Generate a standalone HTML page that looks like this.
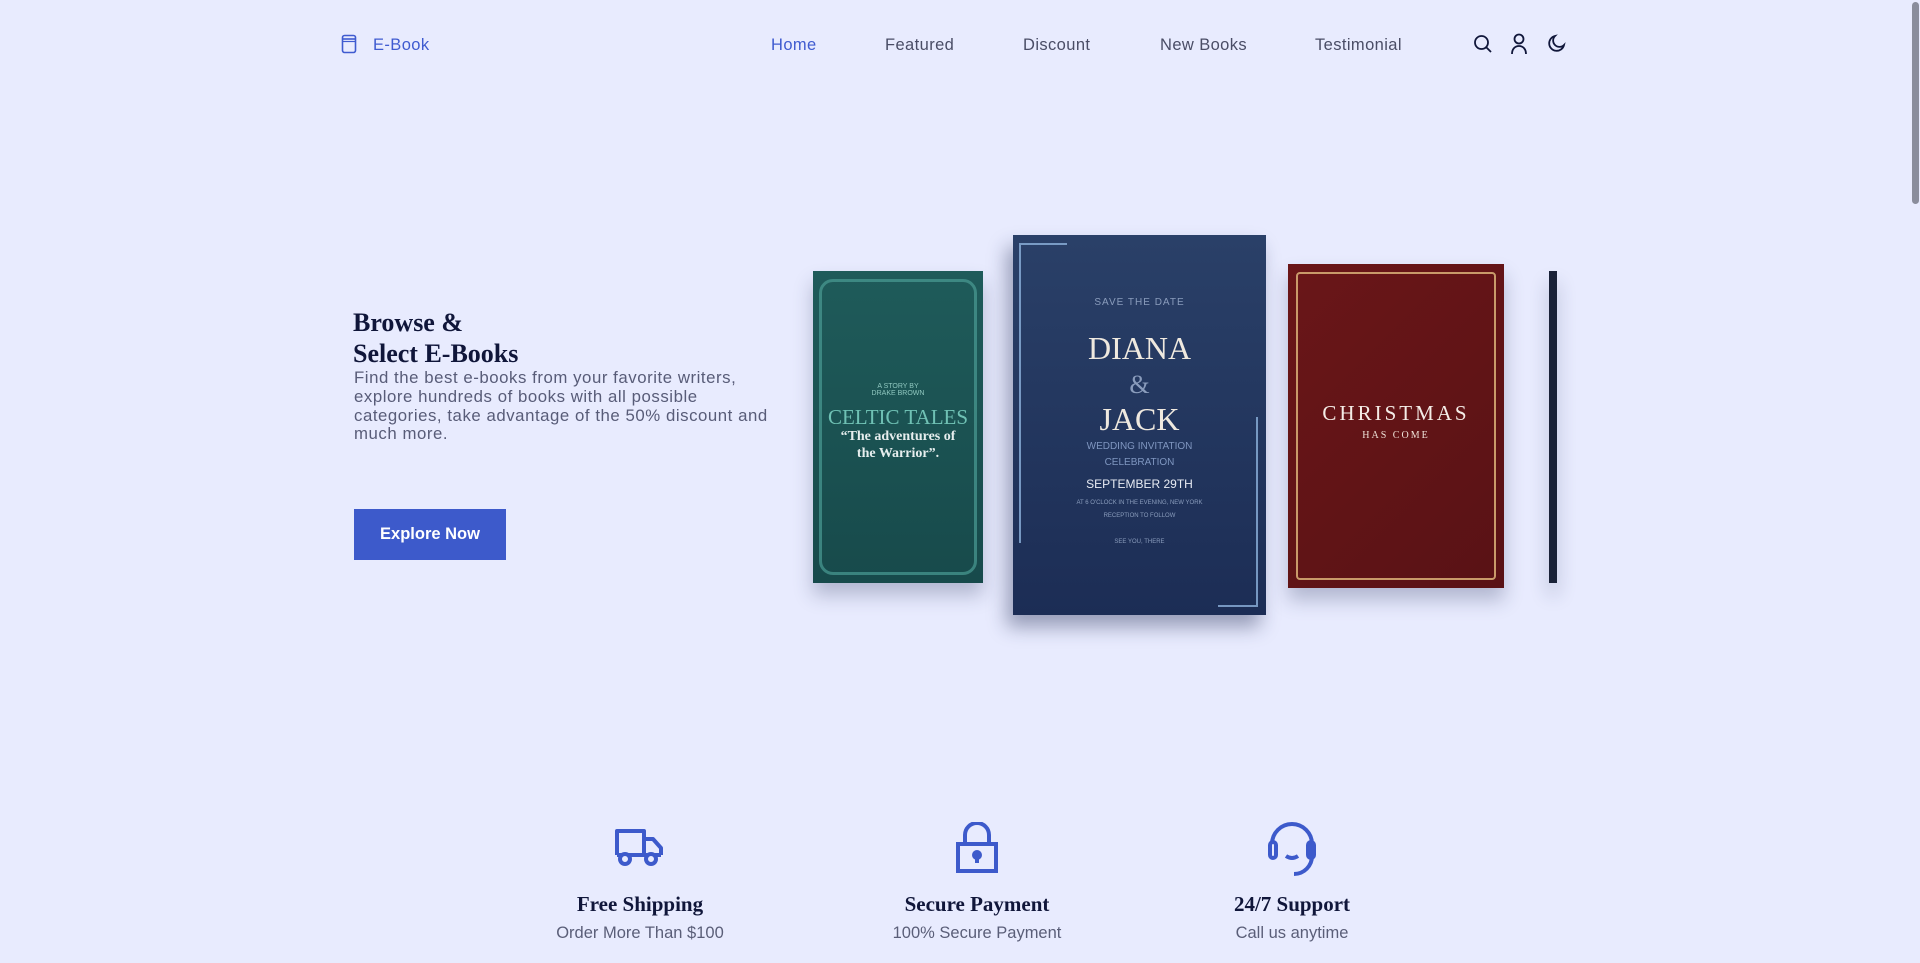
<!DOCTYPE html>
<html><head><meta charset="utf-8"><style>
*{margin:0;padding:0;box-sizing:border-box}
body{width:1920px;height:963px;overflow:hidden;background:#e8ebfe;font-family:"Liberation Sans",sans-serif;color:#5a5e78;position:relative}
.a{position:absolute}
.nav{font-size:16.5px;color:#4a4d66;top:36px;letter-spacing:.4px}
.serif{font-family:"Liberation Serif",serif;font-weight:bold;color:#10163a}
.book{position:absolute;box-shadow:0 12px 18px rgba(40,50,90,.28)}
.ct{text-align:center;position:absolute;left:0;right:0}
</style></head><body>
<svg class="a" style="left:341px;top:34px" width="16" height="20" viewBox="0 0 16 20"><rect x="1.5" y="1.5" width="13" height="17" rx="2" fill="none" stroke="#3f5bd0" stroke-width="1.6"/><line x1="1.5" y1="5" x2="14.5" y2="5" stroke="#3f5bd0" stroke-width="1.6"/><line x1="1.5" y1="7.5" x2="14.5" y2="7.5" stroke="#3f5bd0" stroke-width="1.2"/></svg>
<div class="a nav" style="left:373px;color:#3f5bd0">E-Book</div>
<div class="a nav" style="left:771px;color:#3f5bd0">Home</div>
<div class="a nav" style="left:885px">Featured</div>
<div class="a nav" style="left:1023px">Discount</div>
<div class="a nav" style="left:1160px">New Books</div>
<div class="a nav" style="left:1315px">Testimonial</div>
<svg class="a" style="left:1473px;top:34px" width="20" height="20" viewBox="0 0 20 20" fill="none" stroke="#10163a" stroke-width="1.8"><circle cx="8.5" cy="8.5" r="6.5"/><line x1="13.5" y1="13.5" x2="18" y2="18"/></svg>
<svg class="a" style="left:1510px;top:33px" width="18" height="22" viewBox="0 0 18 22" fill="none" stroke="#10163a" stroke-width="1.8"><circle cx="9" cy="6" r="4.5"/><path d="M2 21c0-5 3-8 7-8s7 3 7 8"/></svg>
<svg class="a" style="left:1546px;top:34px" width="20" height="20" viewBox="0 0 20 20" fill="none" stroke="#10163a" stroke-width="1.8"><path d="M9 2a7.5 7.5 0 1 0 9 9A6 6 0 0 1 9 2z"/></svg>
<div class="a" style="left:1911px;top:0;width:9px;height:963px;background:#e8ebfe"></div>
<div class="a" style="left:1912px;top:2px;width:7px;height:202px;background:#8a8d9c;border-radius:4px"></div>
<div class="a serif" style="left:353px;top:307px;font-size:26px;line-height:31px">Browse &amp;<br>Select E-Books</div>
<div class="a" style="left:354px;top:369px;width:418px;font-size:16.8px;line-height:18.8px;letter-spacing:.55px;color:#585c78">Find the best e-books from your favorite writers, explore hundreds of books with all possible categories, take advantage of the 50% discount and much more.</div>
<div class="a" style="left:354px;top:509px;width:152px;height:51px;background:#3d5acb;color:#fff;font-weight:bold;font-size:16.5px;line-height:51px;text-align:center">Explore Now</div>
<div class="book" style="left:813px;top:271px;width:170px;height:312px;background:linear-gradient(#1f5b5a,#174a4b)">
 <div class="a" style="left:6px;top:8px;right:6px;bottom:8px;border:3px solid #4a9b94;border-radius:14px;opacity:.7"></div>
 <div class="ct" style="top:112px;font-size:7px;color:#8fc7bf">A STORY BY<br>DRAKE BROWN</div>
 <div class="ct" style="top:134px;font-family:'Liberation Serif',serif;font-size:21px;color:#6fc1b4">CELTIC TALES</div>
 <div class="ct" style="top:157px;font-family:'Liberation Serif',serif;font-size:14px;line-height:17px;color:#e6eeee;font-weight:bold">“The adventures of<br>the Warrior”.</div>
</div>
<div class="book" style="left:1013px;top:235px;width:253px;height:380px;background:linear-gradient(#2a4068,#1c2d55);box-shadow:-6px 12px 18px rgba(30,40,80,.4)">
 <div class="a" style="left:6px;top:8px;width:48px;height:300px;border-left:2px solid #8db2dc;border-top:2px solid #8db2dc;opacity:.8"></div>
 <div class="a" style="right:8px;bottom:8px;width:40px;height:190px;border-right:2px solid #8db2dc;border-bottom:2px solid #8db2dc;opacity:.8"></div>
 <div class="ct" style="top:62px;font-size:10px;letter-spacing:1px;color:#8a9cbc">SAVE THE DATE</div>
 <div class="ct" style="top:96px;font-family:'Liberation Serif',serif;font-size:32px;line-height:34px;color:#efe9df">DIANA<br><span style="color:#8a9cbc;font-size:26px">&amp;</span><br>JACK</div>
 <div class="ct" style="top:204px;font-size:10px;color:#7f96c0;line-height:16px">WEDDING INVITATION<br>CELEBRATION</div>
 <div class="ct" style="top:242px;font-size:12px;color:#e8ecf4">SEPTEMBER 29TH</div>
 <div class="ct" style="top:262px;font-size:6px;color:#8a9cbc;line-height:13px">AT 6 O'CLOCK IN THE EVENING, NEW YORK<br>RECEPTION TO FOLLOW<br><br>SEE YOU, THERE</div>
</div>
<div class="book" style="left:1288px;top:264px;width:216px;height:324px;background:linear-gradient(135deg,#6a1618,#591215)">
 <div class="a" style="left:8px;top:8px;right:8px;bottom:8px;border:2px solid #c99a6a;border-radius:4px"></div>
 <div class="ct" style="top:137px;font-family:'Liberation Serif',serif;font-size:21px;letter-spacing:3px;color:#f4ece6">CHRISTMAS</div>
 <div class="ct" style="top:166px;font-family:'Liberation Serif',serif;font-size:10px;letter-spacing:2px;color:#efe2d8">HAS COME</div>
</div>
<div class="book" style="left:1549px;top:271px;width:8px;height:312px;background:#1a2238"></div>
<svg class="a" style="left:614px;top:827px" width="52" height="40" viewBox="0 0 52 40" fill="none" stroke="#3d5acb" stroke-width="4" stroke-linejoin="round"><path d="M3 28V4h27v24M30 12h9l8 9v7"/><path d="M3 28h44" /><circle cx="11" cy="32" r="5" fill="#e8ebfe"/><circle cx="37" cy="32" r="5" fill="#e8ebfe"/></svg>
<svg class="a" style="left:955px;top:822px" width="44" height="52" viewBox="0 0 44 52" fill="none" stroke="#3d5acb" stroke-width="4"><path d="M10 22V13a12 12 0 0 1 24 0v9"/><rect x="3" y="22" width="38" height="27"/><circle cx="22" cy="33" r="3" fill="#3d5acb"/><line x1="22" y1="34" x2="22" y2="41"/></svg>
<svg class="a" style="left:1266px;top:820px" width="52" height="56" viewBox="0 0 52 56" fill="none" stroke="#3d5acb" stroke-width="4"><path d="M6 24a20 20 0 0 1 40 0v12a18 18 0 0 1-18 18"/><rect x="4" y="22" width="6" height="16" rx="3"/><rect x="42" y="22" width="6" height="16" rx="3"/><path d="M20 36q6 4 12 0"/></svg>
<div class="a serif" style="left:540px;width:200px;text-align:center;top:892px;font-size:21px">Free Shipping</div>
<div class="a" style="left:520px;width:240px;text-align:center;top:924px;font-size:16.5px">Order More Than $100</div>
<div class="a serif" style="left:857px;width:240px;text-align:center;top:892px;font-size:21px">Secure Payment</div>
<div class="a" style="left:857px;width:240px;text-align:center;top:924px;font-size:16.5px">100% Secure Payment</div>
<div class="a serif" style="left:1172px;width:240px;text-align:center;top:892px;font-size:21px">24/7 Support</div>
<div class="a" style="left:1172px;width:240px;text-align:center;top:924px;font-size:16.5px">Call us anytime</div>
</body></html>
